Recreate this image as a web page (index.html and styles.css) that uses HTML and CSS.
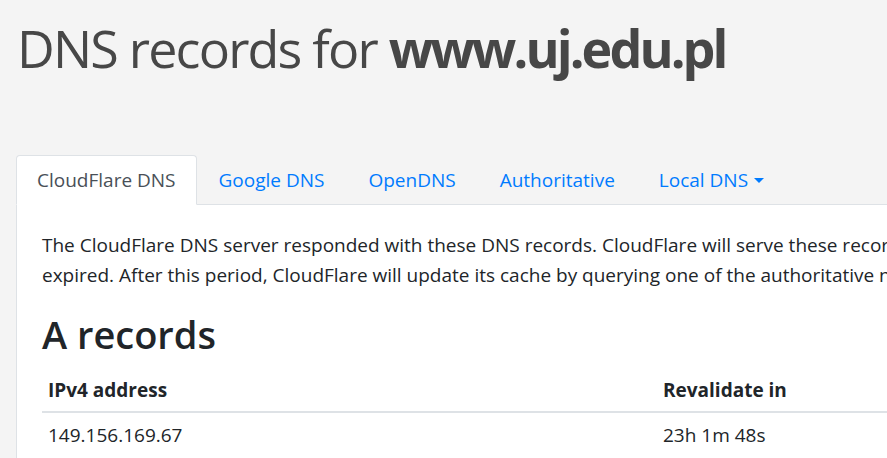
FILE: index.html
```html
<!DOCTYPE html>
<html lang="en">
<head>
<meta charset="utf-8">
<title>DNS records for www.uj.edu.pl</title>
<link rel="stylesheet" href="styles.css">
</head>
<body>
<div class="page">
  <h1 class="title">DNS records for <strong>www.uj.edu.pl</strong></h1>

  <ul class="tabs">
    <li class="tab active">CloudFlare DNS</li>
    <li class="tab">Google DNS</li>
    <li class="tab">OpenDNS</li>
    <li class="tab">Authoritative</li>
    <li class="tab dropdown">Local DNS<span class="caret"></span></li>
  </ul>

  <div class="panel">
    <p class="intro">The CloudFlare DNS server responded with these DNS records. CloudFlare will serve these records as long as the Time-To-Live has not<br>expired. After this period, CloudFlare will update its cache by querying one of the authoritative nameservers.</p>

    <h2 class="section">A records</h2>
    <table class="records">
      <thead>
        <tr><th class="col-ip">IPv4 address</th><th>Revalidate in</th></tr>
      </thead>
      <tbody>
        <tr><td>149.156.169.67</td><td>23h 1m 48s</td></tr>
      </tbody>
    </table>
  </div>
</div>
</body>
</html>
```

FILE: styles.css
```css
html, body {
  margin: 0;
  padding: 0;
}
body {
  background: #f4f4f4;
  font-family: "Open Sans", "Noto Sans", sans-serif;
  color: #212529;
  font-size: 19px;
  line-height: 1.5;
  overflow: hidden;
  width: 887px;
  height: 458px;
}
.page {
  padding: 0 0 0 16px;
  width: 1200px;
}
.title {
  margin: 17px 0 0 1px;
  font-size: 52px;
  font-weight: 500;
  letter-spacing: -1.8px;
  line-height: 1.2;
  color: #474747;
  height: 138px;
}
.title strong {
  font-weight: 700;
  letter-spacing: -2.9px;
}
.tabs {
  list-style: none;
  margin: 0;
  padding: 0;
  display: flex;
  border-bottom: 1px solid #dee2e6;
}
.tab {
  padding: 10px 21px;
  margin-bottom: -1px;
  border: 1px solid transparent;
  border-top-left-radius: 4px;
  border-top-right-radius: 4px;
  color: #007bff;
  line-height: 28px;
  white-space: nowrap;
  display: flex;
  align-items: center;
}
.tab.active {
  padding: 10px 20px;
  color: #495057;
  background: #fff;
  border-color: #dee2e6 #dee2e6 #fff;
}
.caret {
  display: inline-block;
  margin-left: 6px;
  border-top: 5px solid currentColor;
  border-left: 5px solid transparent;
  border-right: 5px solid transparent;
}
.panel {
  background: #fff;
  border: 1px solid #dee2e6;
  border-top: 0;
  padding: 25px 25px 40px 25px;
}
.intro {
  margin: 0 0 20px 0;
  line-height: 30px;
  white-space: nowrap;
}
.section {
  margin: 0 0 10px 0;
  font-size: 38px;
  font-weight: 600;
  line-height: 48px;
}
.records {
  border-collapse: collapse;
  width: 1100px;
}
.records th, .records td {
  text-align: left;
  padding: 7px 6px 6px 6px;
  line-height: 30px;
}
.records th {
  font-weight: 700;
  border-bottom: 2px solid #dee2e6;
}
.records .col-ip {
  width: 603px;
}
```
